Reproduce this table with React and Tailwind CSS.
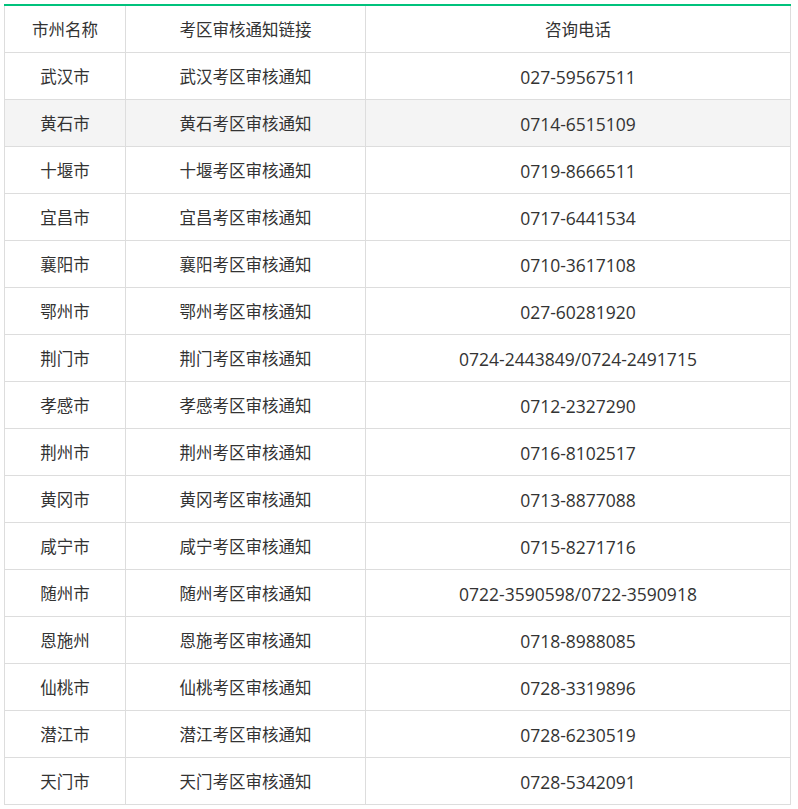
import React from "react";

const rows = [
  ["武汉市", "027-59567511"],
  ["黄石市", "0714-6515109"],
  ["十堰市", "0719-8666511"],
  ["宜昌市", "0717-6441534"],
  ["襄阳市", "0710-3617108"],
  ["鄂州市", "027-60281920"],
  ["荆门市", "0724-2443849/0724-2491715"],
  ["孝感市", "0712-2327290"],
  ["荆州市", "0716-8102517"],
  ["黄冈市", "0713-8877088"],
  ["咸宁市", "0715-8271716"],
  ["随州市", "0722-3590598/0722-3590918"],
  ["恩施州", "0718-8988085"],
  ["仙桃市", "0728-3319896"],
  ["潜江市", "0728-6230519"],
  ["天门市", "0728-5342091"],
];

const font = {
  fontFamily: '"Open Sans", "Noto Sans CJK SC", sans-serif',
};

export default function App() {
  return (
    <div className="bg-white pl-[4px] pt-[4px] min-h-[809px]" style={font}>
      <table className="w-[787px] border-collapse table-fixed text-[16.5px] text-[#333]">
        <colgroup>
          <col className="w-[121px]" />
          <col className="w-[240px]" />
          <col />
        </colgroup>
        <thead>
          <tr className="h-[47px]">
            <th className="font-normal pt-[4px] border border-[#ddd] border-t-[#00c27c] border-t-2 text-center">市州名称</th>
            <th className="font-normal pt-[4px] border border-[#ddd] border-t-[#00c27c] border-t-2 text-center">考区审核通知链接</th>
            <th className="font-normal pt-[4px] border border-[#ddd] border-t-[#00c27c] border-t-2 text-center">咨询电话</th>
          </tr>
        </thead>
        <tbody>
          {rows.map(([city, phone], i) => (
            <tr key={city} className={`h-[47px] ${i === 1 ? "bg-[#f4f4f4]" : ""}`}>
              <td className="pt-[3px] border border-[#ddd] text-center">{city}</td>
              <td className="pt-[3px] border border-[#ddd] text-center">{city.slice(0, 2)}考区审核通知</td>
              <td className="pt-[3px] border border-[#ddd] text-center text-[17.5px]">{phone}</td>
            </tr>
          ))}
        </tbody>
      </table>
    </div>
  );
}
